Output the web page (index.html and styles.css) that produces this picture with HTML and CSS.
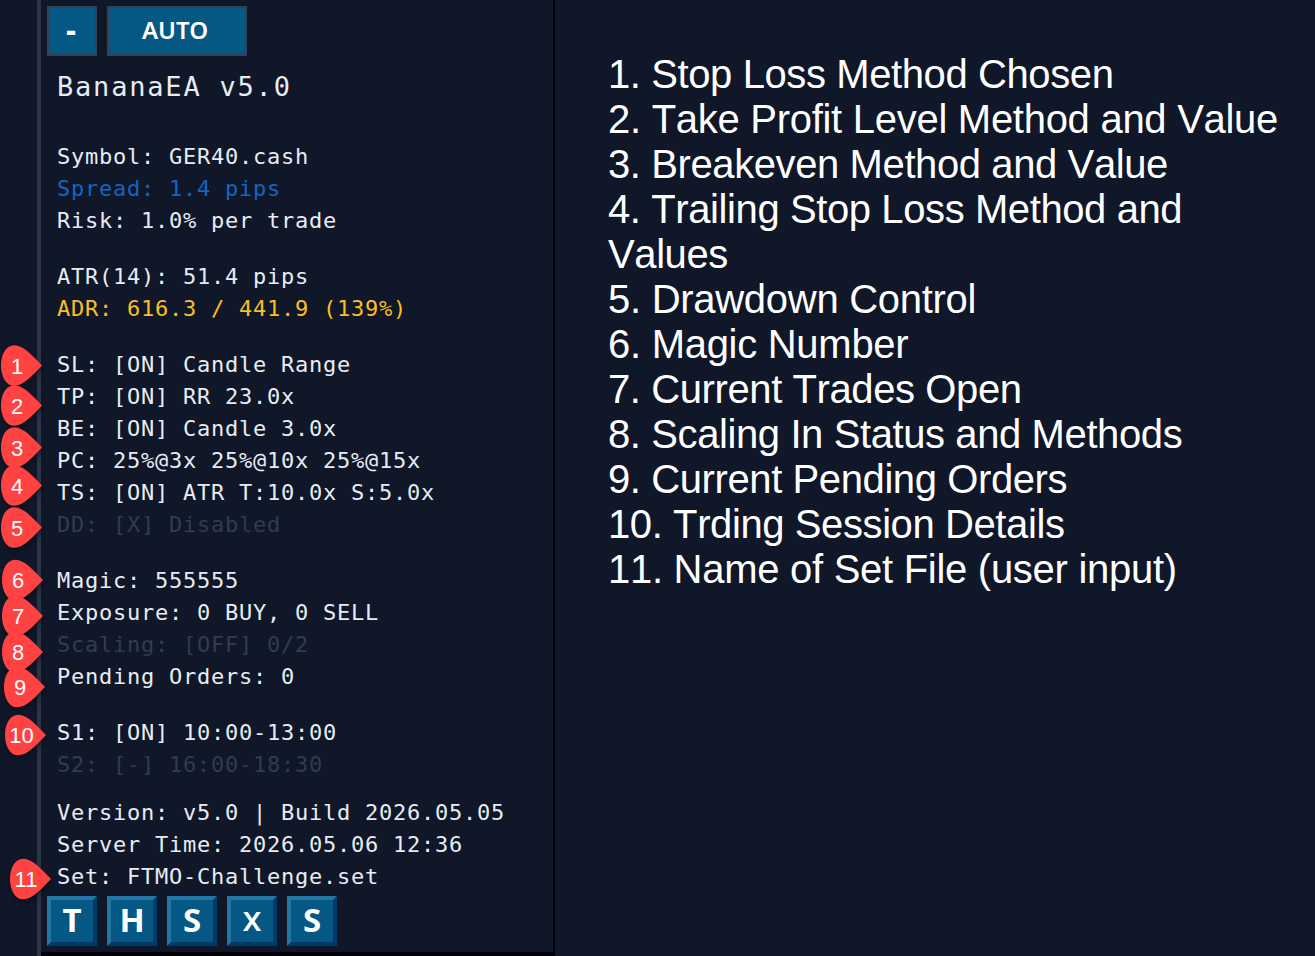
FILE: index.html
```html
<!DOCTYPE html>
<html lang="en">
<head>
<meta charset="utf-8">
<title>BananaEA v5.0</title>
<link rel="stylesheet" href="styles.css">
</head>
<body>
<div class="layout">
  <main class="panel">
    <div class="toolbar">
      <button class="btn btn-min">-</button>
      <button class="btn btn-auto">AUTO</button>
    </div>
    <h1 class="title">BananaEA v5.0</h1>
    <div class="info">
      <section class="group">
        <p>Symbol: GER40.cash</p>
        <p class="blue">Spread: 1.4 pips</p>
        <p>Risk: 1.0% per trade</p>
      </section>
      <section class="group">
        <p>ATR(14): 51.4 pips</p>
        <p class="amber">ADR: 616.3 / 441.9 (139%)</p>
      </section>
      <section class="group">
        <p>SL: [ON] Candle Range</p>
        <p>TP: [ON] RR 23.0x</p>
        <p>BE: [ON] Candle 3.0x</p>
        <p>PC: 25%@3x 25%@10x 25%@15x</p>
        <p>TS: [ON] ATR T:10.0x S:5.0x</p>
        <p class="dim">DD: [X] Disabled</p>
      </section>
      <section class="group">
        <p>Magic: 555555</p>
        <p>Exposure: 0 BUY, 0 SELL</p>
        <p class="dim">Scaling: [OFF] 0/2</p>
        <p>Pending Orders: 0</p>
      </section>
      <section class="group group-tight">
        <p>S1: [ON] 10:00-13:00</p>
        <p class="dim">S2: [-] 16:00-18:30</p>
      </section>
      <section class="group">
        <p>Version: v5.0 | Build 2026.05.05</p>
        <p>Server Time: 2026.05.06 12:36</p>
        <p>Set: FTMO-Challenge.set</p>
      </section>
    </div>
    <div class="actions">
      <button class="key">T</button>
      <button class="key">H</button>
      <button class="key">S</button>
      <button class="key key-x">x</button>
      <button class="key">S</button>
    </div>
  </main>
  <aside class="legend">
    <p>1. Stop Loss Method Chosen</p>
    <p class="loose">2. Take Profit Level Method and Value</p>
    <p>3. Breakeven Method and Value</p>
    <p>4. Trailing Stop Loss Method and<br>Values</p>
    <p class="loose">5. Drawdown Control</p>
    <p class="loose">6. Magic Number</p>
    <p>7. Current Trades Open</p>
    <p>8. Scaling In Status and Methods</p>
    <p>9. Current Pending Orders</p>
    <p>10. Trding Session Details</p>
    <p class="loose">11. Name of Set File (user input)</p>
  </aside>
</div>
<svg class="pins" width="60" height="956" viewBox="0 0 60 956">
  <defs>
    <path id="pin" d="M41 0C32-9 23-20.300 13-20.300C5-20.300 0-11 0 0S5 20.300 13 20.300C23 20.300 32 9 41 0Z"/>
  </defs>
  <g transform="translate(1 365.500)"><use href="#pin"/><text x="16" y="8.500">1</text></g>
  <g transform="translate(1 405.500)"><use href="#pin"/><text x="16" y="8.500">2</text></g>
  <g transform="translate(1 447.500)"><use href="#pin"/><text x="16" y="8.500">3</text></g>
  <g transform="translate(1 485.500)"><use href="#pin"/><text x="16" y="8.500">4</text></g>
  <g transform="translate(1 527.500)"><use href="#pin"/><text x="16" y="8.500">5</text></g>
  <g transform="translate(2 580)"><use href="#pin"/><text x="16" y="8">6</text></g>
  <g transform="translate(2 616)"><use href="#pin"/><text x="16" y="8">7</text></g>
  <g transform="translate(2 652)"><use href="#pin"/><text x="16" y="8">8</text></g>
  <g transform="translate(4 687)"><use href="#pin"/><text x="16" y="8">9</text></g>
  <g transform="translate(5 735)"><use href="#pin"/><text x="16.500" y="8">10</text></g>
  <g transform="translate(10 879)"><use href="#pin"/><text x="16" y="8">11</text></g>
</svg>
</body>
</html>
```
FILE: styles.css
```css
* { box-sizing: border-box; }
body {
  margin: 0;
  background: #0f1729;
  overflow: hidden;
}
p, h1 { margin: 0; font-weight: 400; white-space: pre; }
.layout {
  display: flex;
  width: 1315px;
  height: 956px;
}
.panel {
  width: 518px;
  height: 956px;
  margin-left: 37px;
  padding: 6px 0 0 6px;
  border-left: 4px solid #2a3444;
  border-right: 2px solid #00000a;
  box-shadow: inset 0 -4px #00000a;
}
.toolbar, .actions { display: flex; gap: 10px; }
.btn {
  height: 50px;
  padding: 0 0 2px;
  border: 2px solid #334155;
  background: #055884;
  color: #fff;
  font: 600 24px/1 "Noto Sans", sans-serif;
}
.btn-min { width: 50px; padding-right: 2px; font-weight: 800; font-size: 30px; }
.btn-auto { width: 140px; padding-right: 4px; }
.title {
  margin-top: 14px;
  padding-left: 10px;
  color: #e8ecf2;
  font: 27px/34px "DejaVu Sans Mono", monospace;
  letter-spacing: 1.8px;
}
.info {
  padding: 37px 0 0 10px;
  color: #e8ecf2;
  font: 22px/32px "DejaVu Sans Mono", monospace;
  letter-spacing: 0.755px;
}
.group { margin-bottom: 24px; }
.group-tight { margin-bottom: 16px; }
.group:last-child { margin-bottom: 3px; }
.blue { color: #1565c0; }
.amber { color: #fbbf24; }
.dim { color: #303c4f; }
.key {
  width: 50px;
  height: 50px;
  padding: 0 0 3px;
  border: 4px solid;
  border-color: #2476a6 #003a68 #003a68 #2476a6;
  background: #055884;
  color: #fff;
  font: 700 33px/1 "Noto Sans", sans-serif;
}
.key-x { padding-bottom: 8px; font-weight: 500; font-size: 35px; }
.legend {
  padding: 52px 0 0 53px;
  color: #fff;
  font: 40px/45px "Liberation Sans", Arial, sans-serif;
  font-kerning: none;
  letter-spacing: -0.4px;
}
.loose { letter-spacing: -0.28px; }
.pins {
  position: absolute;
  left: 0;
  top: 0;
  overflow: visible;
}
.pins use {
  fill: #ff4343;
  filter: drop-shadow(1px 3px 2px rgba(0, 0, 0, 0.35));
}
.pins text {
  fill: #fff;
  font: 22px "Liberation Sans", Arial, sans-serif;
  text-anchor: middle;
}
```
